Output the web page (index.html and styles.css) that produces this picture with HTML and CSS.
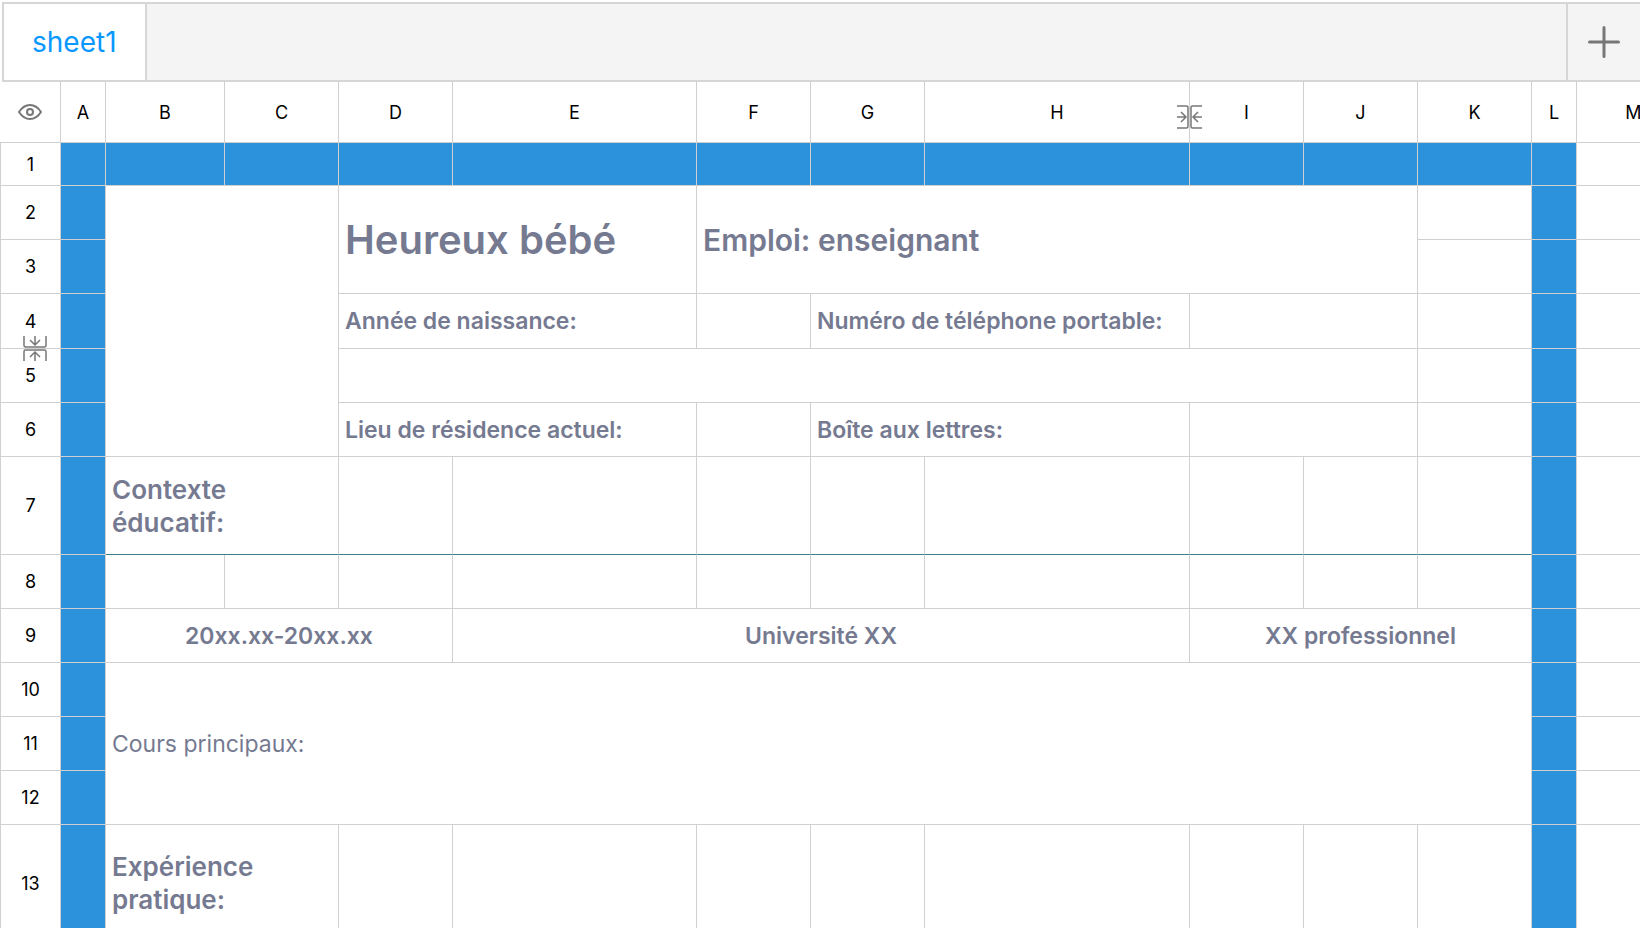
FILE: index.html
```html
<!DOCTYPE html>
<html lang="fr">
<head>
	<meta charset="utf-8">
	<title>sheet1</title>
	<meta name="viewport" content="width=device-width, initial-scale=1">
	<link rel="stylesheet" href="styles.css">
</head>
<body>
	<div class="tabs">
		<button class="tab" type="button">sheet1</button>
		<button class="add_tab" type="button" aria-label="Ajouter une feuille">
			<svg width="32" height="32" viewBox="0 0 32 32"><path d="M1.5 16H30.5M16 1.5V30.5" /></svg>
		</button>
	</div>
	<div class="sheet">
		<table class="grid">
			<colgroup>
				<col class="col_head">
				<col class="col_a">
				<col class="col_b">
				<col class="col_std" span="2">
				<col class="col_e">
				<col class="col_std" span="2">
				<col class="col_h">
				<col class="col_std" span="3">
				<col class="col_l">
				<col class="col_std">
			</colgroup>
			<thead>
				<tr class="row_head">
					<th class="corner">
						<button class="eye" type="button" aria-label="Afficher">
							<svg width="24" height="16" viewBox="0 0 24 16"><path d="M1 8Q5.5 1 12 1T23 8Q18.5 15 12 15T1 8Z" /><circle cx="12" cy="8" r="3" /></svg>
						</button>
					</th>
					<th>A</th>
					<th>B</th>
					<th>C</th>
					<th>D</th>
					<th>E</th>
					<th>F</th>
					<th>G</th>
					<th class="has_handle">H
						<button class="handle handle_col" type="button" aria-label="Redimensionner la colonne">
							<svg width="25" height="24" viewBox="0 0 25 24"><path d="M0 1H9.500Q11 1 11 2.500V21.500Q11 23 9.500 23H0M0 12H9M4 7L9 12L4 17M25 1H15.500Q14 1 14 2.500V21.500Q14 23 15.500 23H25M25 12H16M21 7L16 12L21 17" /></svg>
						</button>
					</th>
					<th>I</th>
					<th>J</th>
					<th>K</th>
					<th>L</th>
					<th>M</th>
				</tr>
			</thead>
			<tbody>
				<tr class="row_first">
					<th>1</th>
					<td class="blue"></td><td class="blue"></td><td class="blue"></td><td class="blue"></td>
					<td class="blue"></td><td class="blue"></td><td class="blue"></td><td class="blue"></td>
					<td class="blue"></td><td class="blue"></td><td class="blue"></td><td class="blue"></td>
					<td></td>
				</tr>
				<tr>
					<th>2</th>
					<td class="blue"></td>
					<td colspan="2" rowspan="5"></td>
					<td class="name" colspan="2" rowspan="2">Heureux bébé</td>
					<td class="job" colspan="5" rowspan="2">Emploi: enseignant</td>
					<td></td>
					<td class="blue"></td>
					<td></td>
				</tr>
				<tr>
					<th>3</th>
					<td class="blue"></td>
					<td></td>
					<td class="blue"></td>
					<td></td>
				</tr>
				<tr class="row_resized">
					<th class="has_handle">4
						<button class="handle handle_row" type="button" aria-label="Redimensionner la ligne">
							<svg width="24" height="25" viewBox="0 0 24 25"><path d="M1 0V9.500Q1 11 2.500 11H21.500Q23 11 23 9.500V0M12 0V9M7 4L12 9L17 4M1 25V15.500Q1 14 2.500 14H21.500Q23 14 23 15.500V25M12 25V16M7 21L12 16L17 21" /></svg>
						</button>
					</th>
					<td class="blue"></td>
					<td class="label" colspan="2">Année de naissance:</td>
					<td></td>
					<td class="label" colspan="2">Numéro de téléphone portable:</td>
					<td colspan="2"></td>
					<td></td>
					<td class="blue"></td>
					<td></td>
				</tr>
				<tr>
					<th>5</th>
					<td class="blue"></td>
					<td colspan="7"></td>
					<td></td>
					<td class="blue"></td>
					<td></td>
				</tr>
				<tr>
					<th>6</th>
					<td class="blue"></td>
					<td class="label" colspan="2">Lieu de résidence actuel:</td>
					<td></td>
					<td class="label" colspan="2">Boîte aux lettres:</td>
					<td colspan="2"></td>
					<td></td>
					<td class="blue"></td>
					<td></td>
				</tr>
				<tr class="row_section">
					<th>7</th>
					<td class="blue"></td>
					<td class="section" colspan="2">Contexte<br>éducatif:</td>
					<td class="rule"></td><td class="rule"></td><td class="rule"></td><td class="rule"></td>
					<td class="rule"></td><td class="rule"></td><td class="rule"></td><td class="rule"></td>
					<td class="blue"></td>
					<td></td>
				</tr>
				<tr>
					<th>8</th>
					<td class="blue"></td>
					<td></td><td></td><td></td><td></td><td></td>
					<td></td><td></td><td></td><td></td><td></td>
					<td class="blue"></td>
					<td></td>
				</tr>
				<tr>
					<th>9</th>
					<td class="blue"></td>
					<td class="label center" colspan="3">20xx.xx-20xx.xx</td>
					<td class="label center" colspan="4">Université XX</td>
					<td class="label center" colspan="3">XX professionnel</td>
					<td class="blue"></td>
					<td></td>
				</tr>
				<tr>
					<th>10</th>
					<td class="blue"></td>
					<td class="courses" colspan="10" rowspan="3">Cours principaux:</td>
					<td class="blue"></td>
					<td></td>
				</tr>
				<tr>
					<th>11</th>
					<td class="blue"></td>
					<td class="blue"></td>
					<td></td>
				</tr>
				<tr>
					<th>12</th>
					<td class="blue"></td>
					<td class="blue"></td>
					<td></td>
				</tr>
				<tr class="row_last">
					<th>13</th>
					<td class="blue"></td>
					<td class="section" colspan="2">Expérience<br>pratique:</td>
					<td></td><td></td><td></td><td></td>
					<td></td><td></td><td></td><td></td>
					<td class="blue"></td>
					<td></td>
				</tr>
			</tbody>
		</table>
	</div>
</body>
</html>
```
FILE: styles.css
```css
* {
	box-sizing: border-box;
}
body {
	margin: 0;
	padding-top: 2px;
	height: 100vh;
	display: flex;
	flex-direction: column;
	overflow: hidden;
	background: #fff;
	font-family: Inter, "Liberation Sans", sans-serif;
}
button {
	padding: 0;
	border: 0;
	background: none;
	font-family: inherit;
	cursor: pointer;
}
svg {
	display: block;
	fill: none;
	stroke: #777;
	stroke-width: 2;
}
.tabs {
	flex: none;
	display: flex;
	justify-content: space-between;
	height: 80px;
	margin-left: 2px;
	border: 2px solid #d6d6d6;
	border-right: 0;
	background: #f4f4f4;
}
.tab {
	padding: 0 28px;
	border-right: 2px solid #d6d6d6;
	background: #fff;
	color: #0a98ff;
	font-size: 28px;
}
.add_tab {
	display: flex;
	align-items: center;
	justify-content: center;
	width: 74px;
	border-left: 2px solid #d6d6d6;
}
.add_tab svg {
	stroke-width: 3;
	stroke-linecap: round;
}
.sheet {
	flex: 1;
	min-height: 0;
	overflow: hidden;
}
.grid {
	width: 0;
	table-layout: fixed;
	border-collapse: separate;
	border-spacing: 0;
}
.col_head {
	width: 61px;
}
.col_a {
	width: 45px;
}
.col_b {
	width: 119px;
}
.col_std {
	width: 114px;
}
.col_e {
	width: 244px;
}
.col_h {
	width: 265px;
}
.col_l {
	width: 45px;
}
.grid tr {
	height: 54px;
}
.grid .row_head {
	height: 61px;
}
.grid .row_first {
	height: 43px;
}
.grid .row_resized {
	height: 55px;
}
.grid .row_section {
	height: 98px;
}
.grid .row_last {
	height: 117px;
}
.grid th,
.grid td {
	padding: 0;
	border-right: 1px solid #d0d0d0;
	border-bottom: 1px solid #d0d0d0;
}
.grid th {
	color: #000;
	font-size: 18px;
	font-weight: 400;
}
.grid tbody th {
	border-left: 1px solid #d0d0d0;
}
.grid td {
	padding-left: 6px;
	color: #757a91;
	text-align: left;
	white-space: nowrap;
}
.grid .blue {
	background: #2c92db;
}
.grid .name {
	font-size: 40px;
	font-weight: 600;
}
.grid .job {
	font-size: 30px;
	font-weight: 600;
}
.grid .label {
	font-size: 23px;
	font-weight: 600;
}
.grid .section {
	font-size: 26px;
	font-weight: 600;
	line-height: 33px;
}
.grid .courses {
	font-size: 23px;
}
.grid .center {
	padding: 0;
	text-align: center;
}
.grid .rule,
.grid .row_section .section {
	border-bottom-color: #3a7f90;
}
.eye {
	display: block;
	margin: 0 auto;
}
.has_handle {
	position: relative;
}
.handle {
	position: absolute;
	z-index: 1;
}
.handle svg {
	stroke-width: 1.5;
}
.handle_col {
	top: 23px;
	right: -13px;
}
.handle_row {
	left: 22px;
	bottom: -13px;
}
```
